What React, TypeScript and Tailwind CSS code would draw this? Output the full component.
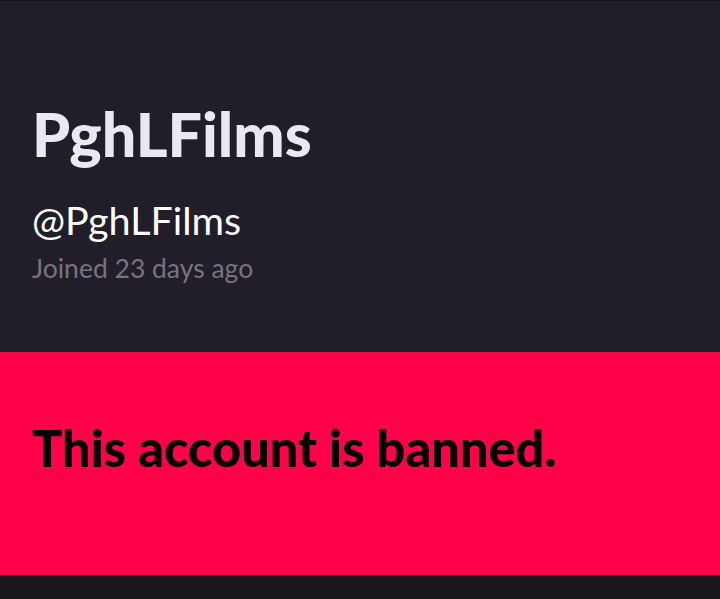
import React from 'react'

const App = () => {
  return (
    <div className="min-h-screen bg-[#17161c] font-['Lato',sans-serif]">
      <div className="h-[352px] border-t border-[#111016] bg-[#211e2a] px-[32px] pt-[98px]">
        <h1 className="text-[61px] font-black leading-[70px] text-[#ece8f3]">PghLFilms</h1>
        <div className="mt-[27px] text-[39.5px] leading-[48px] text-white">@PghLFilms</div>
        <div className="mt-[8px] text-[26.5px] leading-[32px] text-[#78737f]">Joined 23 days ago</div>
      </div>
      <div className="h-[223px] bg-[#ff0049] px-[32px] pt-[66px]">
        <p className="text-[50.5px] font-black leading-[60px] text-black">This account is banned.</p>
      </div>
    </div>
  )
}

export default App
